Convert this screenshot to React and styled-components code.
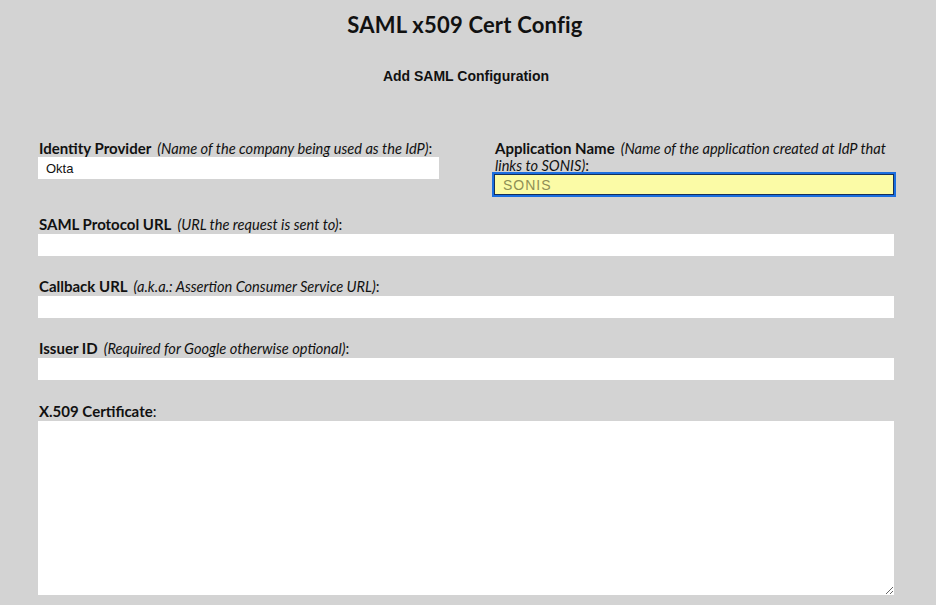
import React from "react";
import styled, { createGlobalStyle } from "styled-components";

const GlobalStyle = createGlobalStyle`
  html, body {
    margin: 0;
    padding: 0;
    background: #d3d3d3;
  }
  body {
    font-family: "Lato", "Liberation Sans", sans-serif;
    color: #111;
  }
`;

const Page = styled.div`
  width: 936px;
  min-height: 605px;
  background: #d3d3d3;
  padding-top: 12px;
  box-sizing: border-box;
`;

const Title = styled.h1`
  margin: 0;
  padding-right: 6px;
  text-align: center;
  font-family: "Lato", sans-serif;
  font-weight: 700;
  font-size: 22px;
  line-height: 26px;
  letter-spacing: 0.2px;
  color: #111;
`;

const SubTitle = styled.h2`
  margin: 30px 0 0;
  padding-right: 4px;
  text-align: center;
  font-family: "Liberation Sans", Arial, sans-serif;
  font-weight: 700;
  font-size: 14px;
  line-height: 16px;
  color: #111;
`;

const Form = styled.form`
  width: 856px;
  margin: 56px 0 0 38px;
`;

const Row = styled.div`
  display: grid;
  grid-template-columns: 401px 400px;
  column-gap: 55px;
  align-items: start;
`;

const Field = styled.div`
  display: flex;
  flex-direction: column;
  margin-bottom: ${(p) => (p.$mb != null ? p.$mb : 22)}px;
`;

const Label = styled.label`
  display: block;
  font-size: 15px;
  line-height: 16px;
  height: ${(p) => (p.$lines || 1) * 16}px;
  margin-bottom: ${(p) => (p.$gap != null ? p.$gap : 2)}px;
  padding-left: 1px;
`;

const Name = styled.span`
  font-weight: 700;
`;

const Hint = styled.span`
  font-style: italic;
  font-weight: 400;
  font-size: 14.6px;
  line-height: 16px;
  margin-left: 6px;
`;

const Input = styled.input`
  box-sizing: border-box;
  display: block;
  width: 100%;
  height: 22px;
  border: none;
  outline: none;
  padding: 0 8px;
  font-family: "Liberation Sans", Arial, sans-serif;
  font-size: 13px;
  color: #111;
  background: #fff;
  margin: 0;

  ${(p) =>
    p.$focused &&
    `
    height: 21px;
    margin-top: 2px;
    background: #fbfba6;
    color: #8f8f55;
    font-size: 14px;
    letter-spacing: 1px;
    border: 1px solid #16305a;
    outline: 2px solid #1a6ee0;
    outline-offset: 0;
  `}
`;

const TextArea = styled.textarea`
  box-sizing: border-box;
  display: block;
  width: 100%;
  height: 174px;
  border: none;
  outline: none;
  background: #fff;
  padding: 4px 8px;
  margin: 0;
  resize: both;
  font-family: "Liberation Sans", Arial, sans-serif;
  font-size: 13px;
`;

export default function App() {
  return (
    <Page>
      <GlobalStyle />
      <Title>SAML x509 Cert Config</Title>
      <SubTitle>Add SAML Configuration</SubTitle>
      <Form onSubmit={(e) => e.preventDefault()}>
        <Row>
          <Field $mb={21}>
            <Label $gap={1}>
              <Name>Identity Provider</Name>
              <Hint>(Name of the company being used as the IdP)</Hint>:
            </Label>
            <Input defaultValue="Okta" />
          </Field>
          <Field $mb={21}>
            <Label $gap={0} $lines={2}>
              <Name>Application Name</Name>
              <Hint>(Name of the application created at IdP that links to SONIS)</Hint>:
            </Label>
            <Input $focused defaultValue="SONIS" />
          </Field>
        </Row>
        <Field>
          <Label>
            <Name>SAML Protocol URL</Name>
            <Hint>(URL the request is sent to)</Hint>:
          </Label>
          <Input />
        </Field>
        <Field>
          <Label>
            <Name>Callback URL</Name>
            <Hint>(a.k.a.: Assertion Consumer Service URL)</Hint>:
          </Label>
          <Input />
        </Field>
        <Field $mb={23}>
          <Label>
            <Name>Issuer ID</Name>
            <Hint>(Required for Google otherwise optional)</Hint>:
          </Label>
          <Input />
        </Field>
        <Field>
          <Label>
            <Name>X.509 Certificate</Name>:
          </Label>
          <TextArea />
        </Field>
      </Form>
    </Page>
  );
}
